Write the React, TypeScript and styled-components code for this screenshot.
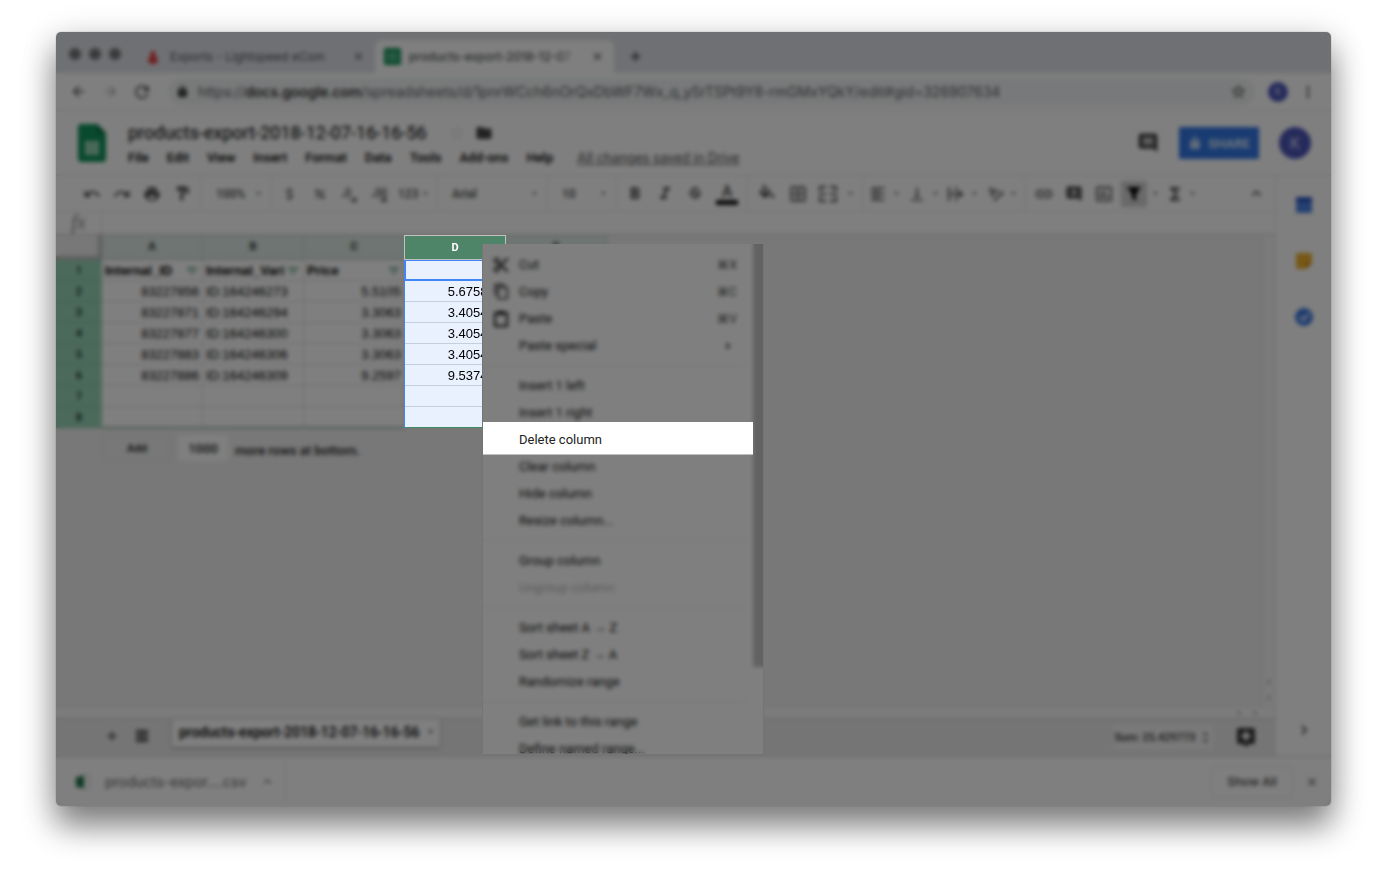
import React from "react";
import styled, { createGlobalStyle, css } from "styled-components";
import {
  MdAdd, MdAddComment, MdArrowBack, MdArrowDropDown, MdArrowDropUp, MdArrowForward, MdArrowRight,
  MdAttachMoney, MdBorderAll, MdChevronRight, MdClose, MdComment, MdContentCopy, MdContentCut,
  MdExpandLess, MdFilterList, MdFolder, MdFormatAlignLeft, MdFormatBold,
  MdFormatItalic, MdFormatPaint, MdFunctions, MdInsertChartOutlined, MdLink,
  MdLock, MdMoreVert, MdPercent, MdPrint, MdRedo, MdRefresh, MdStarBorder, MdStrikethroughS,
  MdTextRotationAngleup, MdUndo, MdUnfoldMore, MdVerticalAlignBottom,
} from "react-icons/md";

const Global = createGlobalStyle`
  * { box-sizing: border-box; }
  body { margin: 0; background: #fff; font-family: Roboto, "Liberation Sans", sans-serif; color: #222; }
  button, input, select { font: inherit; color: inherit; border: 0; background: none; padding: 0; margin: 0; outline: 0; }
  h1, p { margin: 0; }
  svg { flex: none; display: block; }
`;

const Page = styled.div`
  min-height: 100vh;
  padding: 32px 56px 80px;
  display: flex;
`;

const Window = styled.div`
  position: relative;
  z-index: 0;
  flex: 1;
  min-width: 0;
  display: flex;
  flex-direction: column;
  background: #fff;
  border-radius: 5px;
  box-shadow: 0 0 1px rgba(0, 0, 0, 0.5), 0 20px 32px rgba(0, 0, 0, 0.46), 0 6px 36px rgba(0, 0, 0, 0.16);
`;

/* Dims and softens everything below it; the parts in focus are stacked above. */
const Veil = styled.div`
  position: absolute;
  inset: 0;
  z-index: 1;
  border-radius: inherit;
  background: rgba(0, 0, 0, 0.5);
  backdrop-filter: blur(2px);
  pointer-events: none;
`;

const IconButton = styled.button<{ $w?: number }>`
  flex: none;
  width: ${(p) => p.$w ?? 30}px;
  height: 28px;
  display: flex;
  align-items: center;
  justify-content: center;
  color: inherit;
`;

/* Browser chrome */
const TabStrip = styled.div`
  display: flex;
  align-items: flex-end;
  height: 41px;
  padding-left: 13px;
  background: #dee1e6;
  border-radius: 5px 5px 0 0;
`;
const Lights = styled.div`
  display: flex;
  gap: 8px;
  padding-bottom: 13px;
  width: 67px;
`;
const Light = styled.span`
  width: 12px;
  height: 12px;
  border-radius: 50%;
  background: #76777a;
`;
const Tab = styled.div<{ $active?: boolean }>`
  display: flex;
  align-items: center;
  gap: 8px;
  width: 239px;
  height: 33px;
  padding: 0 8px 0 ${(p) => (p.$active ? 9 : 8)}px;
  border-radius: 8px 8px 0 0;
  background: ${(p) => (p.$active ? "#fff" : "none")};
  color: ${(p) => (p.$active ? "#2c3033" : "#4a4d51")};
  font: 12px/16px Inter, sans-serif;
`;
const TabTitle = styled.span`
  flex: 1;
  overflow: hidden;
  white-space: nowrap;
  mask-image: linear-gradient(90deg, #000 88%, transparent);
`;
const NewTab = styled(IconButton)`
  margin-bottom: 3px;
`;
const NavBar = styled.div`
  display: flex;
  align-items: center;
  height: 38px;
  padding: 0 8px 0 6px;
  border-bottom: 1px solid #e4e4e4;
  color: #444;
`;
const Address = styled.div`
  flex: 1;
  min-width: 0;
  display: flex;
  align-items: center;
  gap: 9px;
  height: 28px;
  margin: 0 8px 0 10px;
  padding: 0 2px 0 8px;
  border-radius: 14px;
  background: #f1f3f4;
`;
const Url = styled.div`
  flex: 1;
  min-width: 0;
  overflow: hidden;
  white-space: nowrap;
  font: 14px/20px Inter, sans-serif;
  color: #5c6064;
  strong { font-weight: 500; color: #111; }
`;
const Avatar = styled.span<{ $size: number }>`
  display: flex;
  align-items: center;
  justify-content: center;
  width: ${(p) => p.$size}px;
  height: ${(p) => p.$size}px;
  border-radius: 50%;
  background: #4b55b8;
  color: #d5d8f0;
  font-size: ${(p) => p.$size / 2}px;
`;

/* Spreadsheet application */
const Docs = styled.div`
  position: relative;
  flex: 1;
  display: flex;
  flex-direction: column;
`;
const DocHeader = styled.header`
  display: flex;
  align-items: center;
  height: 64px;
  padding: 0 20px;
`;
const DocInfo = styled.div`
  flex: 1;
  padding: 3px 0 0 20px;
`;
const TitleRow = styled.div`
  display: flex;
  align-items: center;
  height: 26px;
  color: #444;
`;
const Title = styled.h1`
  font: 400 18px/26px Roboto, sans-serif;
  color: #000;
  margin-right: 18px;
`;
const StarButton = styled(IconButton)`
  color: #e4e4e4;
`;
const MenuBar = styled.nav`
  display: flex;
  align-items: center;
  gap: 18px;
  height: 24px;
  font-size: 13px;
  font-weight: 500;
  color: #000;
`;
const Saved = styled.a`
  margin-left: 6px;
  font-size: 14px;
  font-weight: 400;
  color: #5a5a5a;
  text-decoration: underline;
`;
const ShareButton = styled.button`
  display: flex;
  align-items: center;
  justify-content: center;
  gap: 6px;
  width: 80px;
  height: 32px;
  margin: 0 20px 0 16px;
  background: #3177e4;
  color: #dfe9fa;
  font-size: 13px;
  font-weight: 700;
`;
const Body = styled.div`
  flex: 1;
  display: flex;
`;
const Main = styled.main`
  flex: 1;
  min-width: 0;
  display: flex;
  flex-direction: column;
`;
const Toolbar = styled.div`
  display: flex;
  align-items: center;
  height: 37px;
  padding: 0 4px 0 21px;
  border-top: 1px solid #e0e0e0;
  border-bottom: 1px solid #e8e8e8;
  color: #484848;
  font-size: 12px;
  font-weight: 500;
`;
const Divider = styled.span`
  flex: none;
  width: 1px;
  height: 36px;
  margin: 0 3px;
  background: #e9e9e9;
`;
const Picker = styled.span<{ $w: number; $pad: number }>`
  flex: none;
  display: flex;
  align-items: center;
  justify-content: space-between;
  width: ${(p) => p.$w}px;
  padding: 0 4px 0 ${(p) => p.$pad}px;
  select { flex: 1; min-width: 0; appearance: none; }
`;
const DropButton = styled.button<{ $w?: number }>`
  flex: none;
  display: flex;
  align-items: center;
  justify-content: space-between;
  width: ${(p) => p.$w ?? 39}px;
  height: 28px;
  padding: 0 3px;
`;
const ActiveTool = styled(IconButton)`
  width: 26px;
  height: 26px;
  margin: 0 2px;
  background: #d2d2d2;
  color: #000;
`;
const ColorTool = styled(IconButton)`
  flex-direction: column;
  font-size: 16px;
  line-height: 17px;
  &::after { content: ""; width: 22px; height: 5px; background: #111; }
`;
const Push = styled.span`
  margin-left: auto;
`;
const FormulaBar = styled.label`
  display: flex;
  height: 23px;
  border-bottom: 1px solid #c8c8c8;
  span {
    width: 46px;
    border-right: 1px solid #e0e0e0;
    text-align: center;
    font: italic 20px/20px "Liberation Serif", serif;
    color: #888;
  }
  input { flex: 1; }
`;
const GridArea = styled.div`
  flex: 1;
  display: flex;
  background: #f0f0f0;
`;
const Canvas = styled.div`
  flex: 1;
  min-width: 0;
`;
const Sheet = styled.table`
  border-collapse: separate;
  border-spacing: 0;
  table-layout: fixed;
  width: 551px;
  font: 13px/18px "Liberation Sans", sans-serif;
  color: #000;
`;
const focusStack = css`
  position: relative;
  z-index: 2;
`;
const ColHead = styled.th<{ $focus?: boolean }>`
  height: 25px;
  padding: 0;
  font: 700 11px/22px Roboto, sans-serif;
  background: #dceae4;
  color: #333;
  border-right: 1px solid #c4d2cc;
  border-bottom: 1px solid #c0c0c0;
  ${(p) => p.$focus && css`
    ${focusStack}
    background: #4e8468;
    color: #fff;
    border: 1px solid #c0c0c0;
    border-left: 0;
    box-shadow: -1px 0 0 #c0c0c0;
  `}
`;
const Corner = styled.td`
  background: #f0f0f0;
  border-right: 4px solid #bcbcbc;
  border-bottom: 4px solid #bcbcbc;
`;
const RowHead = styled.th`
  height: 21px;
  padding: 1px 0 0;
  background: #98d4b8;
  border-bottom: 1px solid #88c4a8;
  font: 500 11px/18px Roboto, sans-serif;
  color: #122;
`;
const Cell = styled.td<{ $right?: boolean; $bold?: boolean; $focus?: boolean; $active?: boolean; $last?: boolean }>`
  height: 21px;
  padding: 2px 3px 0;
  overflow: hidden;
  white-space: nowrap;
  text-align: ${(p) => (p.$right ? "right" : "left")};
  font-weight: ${(p) => (p.$bold ? 700 : 400)};
  background: #fff;
  border-right: 1px solid #dcdcdc;
  border-bottom: 1px solid ${(p) => (p.$last ? "#3d8c62" : "#dcdcdc")};
  ${(p) => p.$focus && css`
    ${focusStack}
    background: #e9f0fe;
    box-shadow: -1px 0 0 #4285f4;
    border-bottom-color: ${p.$last ? "#3d8c62" : "#c6cddb"};
  `}
  ${(p) => p.$active && css`
    border: 2px solid #4285f4;
    border-width: 1px 2px 2px 1px;
  `}
`;
const FilterHead = styled.div`
  display: flex;
  align-items: center;
  span { flex: 1; }
  button { width: 14px; height: 14px; color: #2d7c52; }
`;
const AddRows = styled.form`
  display: flex;
  align-items: center;
  gap: 7px;
  padding: 7px 0 0 47px;
  font-size: 13px;
  button { width: 68px; height: 26px; border: 1px solid #e2e2e2; font-size: 11px; font-weight: 700; color: #333; }
  input { width: 50px; height: 26px; background: #fff; text-align: center; font-weight: 500; }
  label { padding-top: 5px; font-weight: 500; }
`;
const VScroll = styled.div`
  display: flex;
  flex-direction: column;
  justify-content: flex-end;
  align-items: center;
  gap: 4px;
  width: 13px;
  padding-bottom: 2px;
  background: #f6f6f6;
  border-left: 1px solid #e4e4e4;
  color: #888;
`;
const HScroll = styled.div`
  display: flex;
  justify-content: flex-end;
  align-items: center;
  gap: 4px;
  height: 12px;
  padding-right: 14px;
  background: #f8f8f8;
  border-top: 1px solid #e4e4e4;
  color: #888;
`;
const SheetBar = styled.div`
  display: flex;
  align-items: flex-start;
  height: 38px;
  padding-left: 41px;
  background: #ebebeb;
  border-top: 1px solid #cccccc;
  color: #333;
`;
const SheetTab = styled.button`
  display: flex;
  align-items: center;
  justify-content: space-between;
  width: 268px;
  height: 28px;
  margin-left: 15px;
  padding: 0 4px 3px 7px;
  background: #fff;
  box-shadow: 0 1px 3px rgba(0, 0, 0, 0.4);
  font-size: 14px;
  font-weight: 500;
  white-space: nowrap;
  color: #000;
`;
const SumButton = styled.button`
  display: flex;
  align-items: center;
  justify-content: center;
  gap: 3px;
  width: 104px;
  height: 28px;
  margin: 4px 16px 0 auto;
  background: #f3f3f3;
  border: 1px solid #e6e6e6;
  font-size: 11px;
  font-weight: 500;
`;
const SheetTool = styled(IconButton)`
  margin-top: 3px;
`;
const Explore = styled(IconButton)`
  margin: 4px 14px 0 0;
`;
const SidePanel = styled.aside`
  display: flex;
  flex-direction: column;
  align-items: center;
  gap: 28px;
  width: 56px;
  padding: 15px 0 12px;
  border-left: 1px solid #e4e4e4;
  border-top: 1px solid #e0e0e0;
  color: #444;
`;
const PanelToggle = styled(IconButton)`
  margin-top: auto;
`;
const Downloads = styled.footer`
  display: flex;
  align-items: center;
  height: 50px;
  padding: 0 4px 0 20px;
  border-top: 1px solid #cccccc;
  color: #444;
`;
const FileItem = styled.button`
  display: flex;
  align-items: center;
  gap: 14px;
  width: 210px;
  height: 40px;
  border-right: 1px solid #e0e0e0;
  font: 14px/16px Inter, sans-serif;
  color: #666;
`;
const ShowAll = styled.button`
  width: 82px;
  height: 32px;
  margin: 0 4px 0 auto;
  border: 1px solid #e6e6e6;
  border-radius: 4px;
  font: 500 12px/16px Inter, sans-serif;
`;

/* Context menu */
const ContextMenu = styled.div`
  position: absolute;
  z-index: 3;
  top: 133px;
  bottom: 1px;
  left: 426px;
  width: 282px;
  display: flex;
  overflow: hidden;
  background: #fff;
  border: 1px solid #747474;
  border-top: 0;
`;
const MenuItems = styled.div`
  flex: 1;
  padding-top: 7px;
`;
const Item = styled.button<{ $focus?: boolean }>`
  display: grid;
  grid-template-columns: 36px 1fr auto;
  align-items: center;
  width: 100%;
  height: 27px;
  padding-right: 16px;
  text-align: left;
  font-size: 13px;
  color: #111;
  svg { justify-self: center; }
  &:disabled { color: #b8b8b8; }
  ${(p) => p.$focus && css`
    ${focusStack}
    height: 33px;
    margin: -4px 0 -2px;
    padding-top: 2px;
    background: #fff;
    border-bottom: 1px solid #c0c0c0;
    color: #222;
  `}
`;
const ItemLabel = styled.span`
  grid-column: 2;
`;
const ItemHint = styled.span`
  font-size: 12px;
  color: #444;
`;
const Rule = styled.hr`
  height: 1px;
  margin: 6px 6px 6px 0;
  border: 0;
  background: #ebebeb;
`;
const Thumb = styled.div`
  width: 10px;
  height: 423px;
  background: #c4c4c4;
`;

const Arrow = () => <MdArrowDropDown size={11} />;

const SheetsLogo = () => (
  <svg width="28" height="38" viewBox="0 0 28 38">
    <path d="M3 0h16l9 9v26a3 3 0 0 1-3 3H3a3 3 0 0 1-3-3V3a3 3 0 0 1 3-3z" fill="#12935a" />
    <path d="M19 0l9 9h-9z" fill="#0c6e42" />
    <path d="M7 17h14v14H7z" fill="#a9dcc2" />
    <path d="M7 21.500h14M7 26.500h14M14 17v14" stroke="#5bb98a" strokeWidth="1" />
  </svg>
);
const SheetsFavicon = () => (
  <svg width="17" height="17" viewBox="0 0 17 17">
    <rect width="17" height="17" rx="2" fill="#12935a" />
    <path d="M4 5h9v7H4zM4 8.500h9M8.500 5v7" fill="none" stroke="#7cc7a0" strokeWidth="1.300" />
  </svg>
);
const Flame = () => (
  <svg width="12" height="14" viewBox="0 0 12 14">
    <path d="M6 0l3 4-1 2 3 3c0 3-2 5-5 5s-5-2-5-5l3-3-1-2z" fill="#e0393e" />
  </svg>
);
const FillIcon = () => (
  <svg width="18" height="20" viewBox="0 0 22 24" fill="currentColor">
    <path d="M16.560 8.940L7.620 0 6.210 1.410l2.380 2.380-5.150 5.150a1.490 1.490 0 0 0 0 2.120l5.500 5.500c.29.29.68.44 1.060.44s.77-.15 1.060-.44l5.500-5.500c.59-.58.59-1.530 0-2.120zM5.210 10L10 5.210 14.790 10H5.210zM19 11.500s-2 2.170-2 3.500c0 1.100.9 2 2 2s2-.9 2-2c0-1.330-2-3.500-2-3.500z" />
  </svg>
);
const PasteIcon = () => (
  <svg width="18" height="18" viewBox="0 0 18 18" fill="none" stroke="currentColor" strokeWidth="2">
    <path d="M3 3h12v13H3z" />
    <path d="M6 3h6" strokeWidth="4" />
  </svg>
);
const SheetListIcon = () => (
  <svg width="14" height="14" viewBox="0 0 14 14" stroke="currentColor" strokeWidth="2">
    <path d="M1 2h12M1 5.300h12M1 8.700h12M1 12h12" />
  </svg>
);
const Decimals = ({ more }: { more?: boolean }) => (
  <svg width="20" height="20" viewBox="0 0 20 20" fill="none" stroke="currentColor" strokeWidth="1.300">
    <circle cx="3" cy="12" r="0.600" />
    <ellipse cx="8" cy="8.500" rx="2" ry="3.800" />
    {more && <ellipse cx="14" cy="8.500" rx="2" ry="3.800" />}
    <path d="M10 16h6M13.500 13.500l3 2.500-3 2.500" />
  </svg>
);
const MergeIcon = () => (
  <svg width="20" height="18" viewBox="0 0 20 18" fill="none" stroke="currentColor" strokeWidth="2">
    <path d="M8 2H2v4M2 12v4h6M12 2h6v4M18 12v4h-6M1 9h7M19 9h-7" />
  </svg>
);
const WrapIcon = () => (
  <svg width="18" height="16" viewBox="0 0 18 16" fill="none" stroke="currentColor" strokeWidth="1.800">
    <path d="M2 1v14M9 1v4M9 11v4M4 8h11M12 5l3 3-3 3" />
  </svg>
);
const FunnelIcon = () => (
  <svg width="18" height="18" viewBox="0 0 18 18"><path d="M2 2h14l-5 7v7l-4-3V9z" fill="currentColor" /></svg>
);
const ExploreIcon = () => (
  <svg width="20" height="20" viewBox="0 0 20 20">
    <path d="M3 1h14a2 2 0 0 1 2 2v12a2 2 0 0 1-2 2h-4l-3 3-3-3H3a2 2 0 0 1-2-2V3a2 2 0 0 1 2-2z" fill="#333" />
    <path d="M10 3l2 4 4 2-4 2-2 4-2-4-4-2 4-2z" fill="#fff" />
  </svg>
);
const CsvIcon = () => (
  <svg width="15" height="16" viewBox="0 0 15 16">
    <path d="M5 1h9v14H5z" fill="#fff" stroke="#ccc" />
    <path d="M0 3l8-1v12l-8-1z" fill="#1f7245" />
  </svg>
);
const CalendarIcon = () => (
  <svg width="16" height="16" viewBox="0 0 16 16">
    <rect width="16" height="16" rx="1" fill="#4a80e0" />
    <path d="M0 0h16v5H0z" fill="#2a56c6" />
  </svg>
);
const KeepIcon = () => (
  <svg width="16" height="16" viewBox="0 0 16 16">
    <path d="M1 0h14a1 1 0 0 1 1 1v9l-6 6H1a1 1 0 0 1-1-1V1a1 1 0 0 1 1-1z" fill="#eeb02c" />
    <path d="M16 10l-6 6v-6z" fill="#c98a10" />
  </svg>
);
const TasksIcon = () => (
  <svg width="18" height="18" viewBox="0 0 18 18">
    <circle cx="9" cy="9" r="9" fill="#3c78e0" />
    <path d="M5 9l3 3 6-6" fill="none" stroke="#fff" strokeWidth="2" />
  </svg>
);

const rows: [string, string, string, string][] = [
  ["83227856", "ID:164246273", "5.5105", "5.675815"],
  ["83227871", "ID:164246294", "3.3063", "3.405489"],
  ["83227877", "ID:164246300", "3.3063", "3.405489"],
  ["83227883", "ID:164246306", "3.3063", "3.405489"],
  ["83227886", "ID:164246309", "9.2597", "9.537491"],
  ["", "", "", ""],
  ["", "", "", ""],
];

type Entry = { label: string; hint?: React.ReactNode; icon?: React.ReactNode; focus?: boolean; disabled?: boolean };
const menuGroups: Entry[][] = [
  [
    { label: "Cut", hint: "⌘X", icon: <MdContentCut size={18} /> },
    { label: "Copy", hint: "⌘C", icon: <MdContentCopy size={17} /> },
    { label: "Paste", hint: "⌘V", icon: <PasteIcon /> },
    { label: "Paste special", hint: <MdArrowRight size={18} /> },
  ],
  [
    { label: "Insert 1 left" },
    { label: "Insert 1 right" },
    { label: "Delete column", focus: true },
    { label: "Clear column" },
    { label: "Hide column" },
    { label: "Resize column..." },
  ],
  [{ label: "Group column" }, { label: "Ungroup column", disabled: true }],
  [{ label: "Sort sheet A → Z" }, { label: "Sort sheet Z → A" }, { label: "Randomize range" }],
  [{ label: "Get link to this range" }, { label: "Define named range..." }],
];

const Chrome = () => (
  <>
    <TabStrip>
      <Lights><Light /><Light /><Light /></Lights>
      <Tab>
        <IconButton as="span" $w={18}><Flame /></IconButton>
        <TabTitle>Exports - Lightspeed eCom</TabTitle>
        <IconButton $w={18} aria-label="Close tab"><MdClose size={13} /></IconButton>
      </Tab>
      <Tab $active>
        <SheetsFavicon />
        <TabTitle>products-export-2018-12-07</TabTitle>
        <IconButton $w={18} aria-label="Close tab"><MdClose size={13} /></IconButton>
      </Tab>
      <NewTab $w={42} aria-label="New tab"><MdAdd size={17} /></NewTab>
    </TabStrip>
    <NavBar>
      <IconButton $w={32} aria-label="Back"><MdArrowBack size={17} /></IconButton>
      <IconButton $w={32} aria-label="Forward"><MdArrowForward size={17} color="#aaa" /></IconButton>
      <IconButton $w={32} aria-label="Reload"><MdRefresh size={20} /></IconButton>
      <Address>
        <MdLock size={13} color="#222" />
        <Url>https://<strong>docs.google.com</strong>/spreadsheets/d/1pnrWCch6nOrQxDbWF7Wx_q_ySrTSPt9Y8-rmGMxYQkY/edit#gid=326907634</Url>
        <IconButton aria-label="Bookmark"><MdStarBorder size={17} /></IconButton>
      </Address>
      <IconButton aria-label="Profile"><Avatar $size={20}>K</Avatar></IconButton>
      <IconButton aria-label="More"><MdMoreVert size={18} /></IconButton>
    </NavBar>
  </>
);

const Tools = () => (
  <Toolbar>
    <IconButton aria-label="Undo"><MdUndo size={18} /></IconButton>
    <IconButton aria-label="Redo"><MdRedo size={18} /></IconButton>
    <IconButton aria-label="Print"><MdPrint size={18} /></IconButton>
    <IconButton aria-label="Paint format"><MdFormatPaint size={17} /></IconButton>
    <Divider />
    <Picker $w={64} $pad={12}><select aria-label="Zoom"><option>100%</option></select><Arrow /></Picker>
    <Divider />
    <IconButton aria-label="Currency"><MdAttachMoney size={16} /></IconButton>
    <IconButton aria-label="Percent"><MdPercent size={14} /></IconButton>
    <IconButton aria-label="Fewer decimals"><Decimals /></IconButton>
    <IconButton aria-label="More decimals"><Decimals more /></IconButton>
    <DropButton>123<Arrow /></DropButton>
    <Divider />
    <Picker $w={103} $pad={11}><select aria-label="Font"><option>Arial</option></select><Arrow /></Picker>
    <Divider />
    <Picker $w={62} $pad={11}><select aria-label="Font size"><option>10</option></select><Arrow /></Picker>
    <Divider />
    <IconButton aria-label="Bold"><MdFormatBold size={20} /></IconButton>
    <IconButton aria-label="Italic"><MdFormatItalic size={20} /></IconButton>
    <IconButton aria-label="Strikethrough"><MdStrikethroughS size={18} /></IconButton>
    <ColorTool $w={34}>A</ColorTool>
    <Divider />
    <IconButton aria-label="Fill colour"><FillIcon /></IconButton>
    <IconButton $w={34} aria-label="Borders"><MdBorderAll size={20} /></IconButton>
    <DropButton $w={44} aria-label="Merge cells"><MergeIcon /><Arrow /></DropButton>
    <Divider />
    <DropButton aria-label="Horizontal align"><MdFormatAlignLeft size={18} /><Arrow /></DropButton>
    <DropButton aria-label="Vertical align"><MdVerticalAlignBottom size={18} /><Arrow /></DropButton>
    <DropButton aria-label="Wrap"><WrapIcon /><Arrow /></DropButton>
    <DropButton aria-label="Rotate"><MdTextRotationAngleup size={20} /><Arrow /></DropButton>
    <Divider />
    <IconButton aria-label="Link"><MdLink size={20} /></IconButton>
    <IconButton aria-label="Comment"><MdAddComment size={18} /></IconButton>
    <IconButton aria-label="Chart"><MdInsertChartOutlined size={20} /></IconButton>
    <ActiveTool aria-label="Filter"><FunnelIcon /></ActiveTool>
    <IconButton $w={13} aria-label="Filter views"><Arrow /></IconButton>
    <DropButton aria-label="Functions"><MdFunctions size={20} /><Arrow /></DropButton>
    <Push><IconButton aria-label="Hide menus"><MdExpandLess size={19} /></IconButton></Push>
  </Toolbar>
);

const Grid = () => (
  <GridArea>
    <Canvas>
      <Sheet>
        <colgroup><col width="46" /><col width="101" /><col width="101" /><col width="101" /><col width="101" /><col width="101" /></colgroup>
        <thead>
          <tr>
            <Corner />
            {["A", "B", "C", "D", "E"].map((c) => <ColHead key={c} $focus={c === "D"}>{c}</ColHead>)}
          </tr>
        </thead>
        <tbody>
          <tr>
            <RowHead>1</RowHead>
            {["Internal_ID", "Internal_Vari", "Price"].map((h) => (
              <Cell key={h} $bold>
                <FilterHead><span>{h}</span><button aria-label={`Filter ${h}`}><MdFilterList size={14} /></button></FilterHead>
              </Cell>
            ))}
            <Cell $focus $active />
            <Cell />
          </tr>
          {rows.map((r, i) => {
            const last = i === rows.length - 1;
            return (
              <tr key={i}>
                <RowHead>{i + 2}</RowHead>
                <Cell $right $last={last}>{r[0]}</Cell>
                <Cell $last={last}>{r[1]}</Cell>
                <Cell $right $last={last}>{r[2]}</Cell>
                <Cell $right $focus $last={last}>{r[3]}</Cell>
                <Cell $last={last} />
              </tr>
            );
          })}
        </tbody>
      </Sheet>
      <AddRows>
        <button type="button">Add</button>
        <input id="more-rows" defaultValue="1000" />
        <label htmlFor="more-rows">more rows at bottom.</label>
      </AddRows>
    </Canvas>
    <VScroll><MdArrowDropUp size={12} /><MdArrowDropDown size={12} /></VScroll>
  </GridArea>
);

const Menu = () => (
  <ContextMenu role="menu">
    <MenuItems>
      {menuGroups.map((group, i) => (
        <React.Fragment key={i}>
          {i > 0 && <Rule />}
          {group.map((e) => (
            <Item key={e.label} role="menuitem" $focus={e.focus} disabled={e.disabled}>
              {e.icon}
              <ItemLabel>{e.label}</ItemLabel>
              <ItemHint>{e.hint}</ItemHint>
            </Item>
          ))}
        </React.Fragment>
      ))}
    </MenuItems>
    <Thumb />
    <Veil />
  </ContextMenu>
);

export default function App() {
  return (
    <Page>
      <Global />
      <Window>
        <Chrome />
        <Docs>
          <DocHeader>
            <IconButton as="a" href="#home" $w={32} aria-label="Sheets home"><SheetsLogo /></IconButton>
            <DocInfo>
              <TitleRow>
                <Title>products-export-2018-12-07-16-16-56</Title>
                <StarButton $w={24} aria-label="Star"><MdStarBorder size={18} /></StarButton>
                <IconButton aria-label="Move to folder"><MdFolder size={18} /></IconButton>
              </TitleRow>
              <MenuBar>
                {["File", "Edit", "View", "Insert", "Format", "Data", "Tools", "Add-ons", "Help"].map((m) => <button key={m}>{m}</button>)}
                <Saved href="#history">All changes saved in Drive</Saved>
              </MenuBar>
            </DocInfo>
            <IconButton aria-label="Comments"><MdComment size={22} color="#333" /></IconButton>
            <ShareButton><MdLock size={14} />SHARE</ShareButton>
            <Avatar $size={32}>K</Avatar>
          </DocHeader>
          <Body>
            <Main>
              <Tools />
              <FormulaBar><span>fx</span><input aria-label="Formula" /></FormulaBar>
              <Grid />
              <HScroll><MdArrowRight size={12} /><MdArrowRight size={12} /></HScroll>
              <SheetBar>
                <SheetTool aria-label="Add sheet"><MdAdd size={16} /></SheetTool>
                <SheetTool aria-label="All sheets"><SheetListIcon /></SheetTool>
                <SheetTab>products-export-2018-12-07-16-16-56<Arrow /></SheetTab>
                <SumButton>Sum: 25.429773<MdUnfoldMore size={13} /></SumButton>
                <Explore aria-label="Explore"><ExploreIcon /></Explore>
              </SheetBar>
            </Main>
            <SidePanel>
              <IconButton aria-label="Calendar"><CalendarIcon /></IconButton>
              <IconButton aria-label="Keep"><KeepIcon /></IconButton>
              <IconButton aria-label="Tasks"><TasksIcon /></IconButton>
              <PanelToggle aria-label="Hide side panel"><MdChevronRight size={20} /></PanelToggle>
            </SidePanel>
          </Body>
          <Menu />
        </Docs>
        <Downloads>
          <FileItem><CsvIcon />products-expor....csv<MdExpandLess size={15} /></FileItem>
          <ShowAll>Show All</ShowAll>
          <IconButton aria-label="Close downloads"><MdClose size={14} /></IconButton>
        </Downloads>
        <Veil />
      </Window>
    </Page>
  );
}
